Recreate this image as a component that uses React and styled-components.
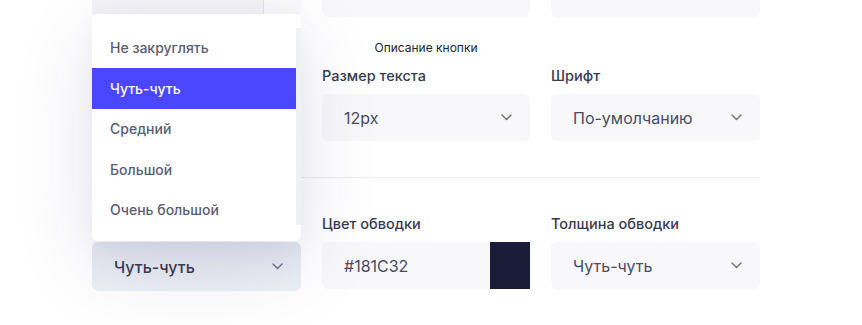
import React from "react";
import styled, { createGlobalStyle } from "styled-components";

const Global = createGlobalStyle`
  html, body { margin: 0; padding: 0; background: #ffffff; }
  body { font-family: Inter, "Noto Sans", sans-serif; -webkit-font-smoothing: antialiased; }
  * { box-sizing: border-box; }
`;

const Page = styled.div`
  width: 862px;
  height: 325px;
  overflow: hidden;
  padding-left: 92px;
`;

const Content = styled.div`
  width: 668px;
`;

const Grid = styled.div`
  display: grid;
  grid-template-columns: 209px 208px 209px;
  column-gap: 21px;
`;

const TopClip = styled.div`
  height: 17px;
  overflow: hidden;
`;

const TopGrid = styled(Grid)`
  margin-top: -30px;
`;

const TopField = styled.div`
  height: 47px;
  border-radius: 6px;
  background: #f8f8fa;
`;

const SplitField = styled.div`
  height: 47px;
  display: grid;
  grid-template-columns: 1fr 38px;
  border-radius: 6px;
  overflow: hidden;
  background: #f8f8fa;
`;

const SplitPart = styled.div`
  background: ${(p) => (p.$light ? "#fafafc" : "#f4f4f7")};
  border-left: ${(p) => (p.$light ? "1px solid #e6e6ec" : "none")};
`;

const CaptionRow = styled(Grid)`
  margin-top: 23px;
`;

const Caption = styled.div`
  grid-column: 2;
  text-align: center;
  font-size: 12px;
  line-height: 16px;
  color: #24242e;
`;

const FieldsRow = styled(Grid)`
  margin-top: ${(p) => p.$mt}px;
`;

const Field = styled.div`
  display: flex;
  flex-direction: column;
  gap: 9px;
`;

const Label = styled.div`
  height: 19px;
  font-size: 14.5px;
  font-weight: 500;
  line-height: 19px;
  color: #3a3a4e;
`;

const Select = styled.div`
  position: relative;
  height: ${(p) => (p.$active ? 49 : 47)}px;
  border-radius: 6px;
  background: ${(p) =>
    p.$active ? "linear-gradient(180deg, #e4e7f0 0%, #eef1f6 100%)" : "#f8f8fa"};
  display: flex;
  align-items: center;
  justify-content: space-between;
  padding: 0 18px 0 22px;
  font-size: 16px;
  font-weight: ${(p) => (p.$active ? 500 : 400)};
  color: ${(p) => (p.$active ? "#3a3a52" : "#4a4a62")};
`;

const Blank = styled.div`
  height: 47px;
`;

const ColorInput = styled.div`
  height: 47px;
  display: grid;
  grid-template-columns: 1fr 40px;
`;

const HexValue = styled.div`
  background: #f8f8fa;
  border-radius: 6px 0 0 6px;
  display: flex;
  align-items: center;
  padding-left: 22px;
  font-size: 16px;
  color: #4a4a62;
`;

const Swatch = styled.div`
  background: ${(p) => p.$color};
`;

const Divider = styled.div`
  margin-top: 36px;
  height: 1px;
  background: #ebecf1;
`;

const Menu = styled.div`
  position: absolute;
  left: 0;
  right: 0;
  bottom: calc(100% + 1px);
  background: #ffffff;
  border-radius: 6px;
  padding: 14px 0 11px;
  display: flex;
  box-shadow: 0 24px 80px rgba(50, 40, 100, 0.13), 0 4px 24px rgba(50, 40, 100, 0.04);
  z-index: 5;
`;

const MenuList = styled.div`
  flex: 1;
  display: flex;
  flex-direction: column;
`;

const MenuItem = styled.div`
  height: 40.5px;
  display: flex;
  align-items: center;
  padding-left: 18px;
  font-size: 14px;
  color: ${(p) => (p.$selected ? "#ffffff" : "#5c5c72")};
  background: ${(p) => (p.$selected ? "#4b46ff" : "transparent")};
`;

const ScrollTrack = styled.div`
  width: 5px;
  margin-bottom: 5px;
  background: #f0f1f5;
`;

const Chevron = () => (
  <svg width="11" height="7" viewBox="0 0 11 7" fill="none">
    <path d="M1 1l4.5 4.5L10 1" stroke="#6c6c82" strokeWidth="1.4" strokeLinecap="round" strokeLinejoin="round" />
  </svg>
);

const options = ["Не закруглять", "Чуть-чуть", "Средний", "Большой", "Очень большой"];

export default function App() {
  return (
    <>
      <Global />
      <Page>
        <Content>
          <TopClip>
            <TopGrid>
              <SplitField>
                <SplitPart />
                <SplitPart $light />
              </SplitField>
              <TopField />
              <TopField />
            </TopGrid>
          </TopClip>

          <CaptionRow>
            <Caption>Описание кнопки</Caption>
          </CaptionRow>

          <FieldsRow $mt={10}>
            <Field>
              <Label />
              <Blank />
            </Field>
            <Field>
              <Label>Размер текста</Label>
              <Select>
                12px
                <Chevron />
              </Select>
            </Field>
            <Field>
              <Label>Шрифт</Label>
              <Select>
                По-умолчанию
                <Chevron />
              </Select>
            </Field>
          </FieldsRow>

          <Divider />

          <FieldsRow $mt={36}>
            <Field>
              <Label />
              <Select $active>
                Чуть-чуть
                <Chevron />
                <Menu>
                  <MenuList>
                    {options.map((o) => (
                      <MenuItem key={o} $selected={o === "Чуть-чуть"}>
                        {o}
                      </MenuItem>
                    ))}
                  </MenuList>
                  <ScrollTrack />
                </Menu>
              </Select>
            </Field>
            <Field>
              <Label>Цвет обводки</Label>
              <ColorInput>
                <HexValue>#181C32</HexValue>
                <Swatch $color="#1b1c37" />
              </ColorInput>
            </Field>
            <Field>
              <Label>Толщина обводки</Label>
              <Select>
                Чуть-чуть
                <Chevron />
              </Select>
            </Field>
          </FieldsRow>
        </Content>
      </Page>
    </>
  );
}
